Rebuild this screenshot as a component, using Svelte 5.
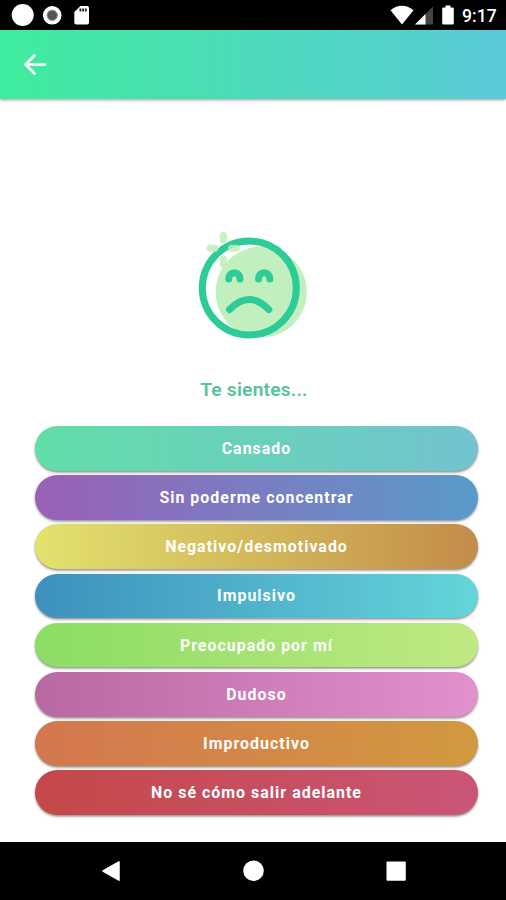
<script>
    const feelings = [
        { label: "Cansado", from: "#62dea8", to: "#72c3cf" },
        { label: "Sin poderme concentrar", from: "#9b5fb8", to: "#589bcb" },
        { label: "Negativo/desmotivado", from: "#e2e36d", to: "#c38c49" },
        { label: "Impulsivo", from: "#3d90bd", to: "#64d6da" },
        { label: "Preocupado por mí", from: "#8bdd65", to: "#c0e983" },
        { label: "Dudoso", from: "#ba68a2", to: "#e391cd" },
        { label: "Improductivo", from: "#d3774f", to: "#d3993f" },
        { label: "No sé cómo salir adelante", from: "#c44848", to: "#cb5577" },
    ];
</script>

<div class="screen">
    <div class="status">
        <svg width="110" height="30" viewBox="0 0 110 30">
            <circle cx="22.7" cy="15" r="11" fill="#fff" />
            <circle cx="52.2" cy="15.3" r="9.3" fill="#fff" />
            <circle cx="52.2" cy="15.3" r="5.2" fill="#555" stroke="#999" />
            <path
                d="M80.5 6H87a2 2 0 0 1 2 2v14.500a2 2 0 0 1-2 2H76.300a2 2 0 0 1-2-2V12z"
                fill="#fff"
            />
            <path d="M79.500 8.500h1.800v3h-1.800zm2.700 0H84v3h-1.800zm2.700 0h1.800v3h-1.800z" fill="#222" />
        </svg>
        <svg class="right" width="66" height="30" viewBox="390 0 66 30">
            <path d="M390.500 10.200Q402 1.500 413.500 10.200L402 24.500z" fill="#fff" />
            <path d="M433 6.500v18h-18z" fill="#444" />
            <path d="M425.500 14v10.500H415z" fill="#fff" />
            <path
                d="M445.500 5.500h5v2h2a1.300 1.300 0 0 1 1.300 1.300v14.400a1.300 1.300 0 0 1-1.300 1.300h-9a1.300 1.300 0 0 1-1.300-1.300V8.800a1.300 1.300 0 0 1 1.300-1.300h2z"
                fill="#fff"
            />
        </svg>
        <span class="time">9:17</span>
    </div>

    <header>
        <button class="back" aria-label="Atrás">
            <svg width="24" height="24" viewBox="0 0 24 24">
                <path d="M22 12.500H3M11.500 3.500l-9 9 9 9" />
            </svg>
        </button>
    </header>

    <main>
        <svg class="face" width="112" height="112" viewBox="0 0 112 112">
            <circle cx="65.200" cy="64" r="45.500" fill="#c2efbe" />
            <g class="lines">
                <circle cx="53.300" cy="60" r="47" />
                <path d="M32.700 51c0-8.500 11.300-8.500 11.300 0M62.500 51c0-8.500 11.300-8.500 11.300 0" />
                <path d="M33.500 81.500q19.800-20 39.300 0" />
            </g>
            <path class="spark" d="M27.300 7.500v4.500M27.300 31v5M14 20.300h5M35.500 20.300h5" />
        </svg>
        <h1>Te sientes...</h1>
        <div class="list">
            {#each feelings as f}
                <button
                    class="feeling"
                    style="background-image: linear-gradient(to right, {f.from}, {f.to})"
                >
                    {f.label}
                </button>
            {/each}
        </div>
    </main>

    <nav>
        <svg width="506" height="58" viewBox="0 842 506 58">
            <path d="M103 871l16-9.200v18.400z" stroke="#fff" stroke-width="1.500" stroke-linejoin="round" />
            <circle cx="253.500" cy="870.800" r="10.300" />
            <rect x="386.500" y="861.500" width="19.300" height="19.300" rx="1" />
        </svg>
    </nav>
</div>

<style>
    :global(body) {
        margin: 0;
    }

    .screen {
        display: flex;
        flex-direction: column;
        width: 506px;
        height: 900px;
        overflow: hidden;
        background: #fff;
        font-family: Roboto, sans-serif;
    }
    button {
        padding: 0;
        border: none;
        font-family: inherit;
    }
    svg {
        display: block;
    }

    .status {
        display: flex;
        align-items: center;
        height: 30px;
        background: #000;
        .right {
            margin-left: auto;
        }
        .time {
            width: 34px;
            margin: 2px 10px 0 6px;
            color: #fff;
            font-size: 17.6px;
            font-weight: 500;
            line-height: 30px;
            white-space: nowrap;
        }
    }

    header {
        display: flex;
        align-items: center;
        box-sizing: border-box;
        height: 68.500px;
        padding-left: 23px;
        background: linear-gradient(to right, #3fec9d, #5acad8);
        box-shadow: 0 1px 3px rgba(0, 0, 0, 0.4);
    }
    .back {
        background: none;
        path {
            fill: none;
            stroke: #fff;
            stroke-width: 2.700;
            stroke-linecap: round;
        }
    }

    main {
        display: flex;
        flex: 1;
        flex-direction: column;
        align-items: center;
    }
    .face {
        margin: 129.500px 0 0 -2px;
        path,
        .lines circle {
            fill: none;
            stroke-linecap: round;
        }
        .lines {
            stroke: #2ccb97;
            stroke-width: 7;
        }
        .spark {
            stroke: #bdedb8;
            stroke-width: 7;
            opacity: 0.85;
        }
    }
    h1 {
        margin: 36px 0 0 2px;
        color: #58c39b;
        font-size: 19.200px;
        font-weight: 600;
        letter-spacing: 0.2px;
        line-height: 28px;
    }
    .list {
        display: flex;
        flex-direction: column;
        gap: 4.500px;
        align-self: stretch;
        margin: 22px 28px 0 35px;
    }
    .feeling {
        height: 44.700px;
        border-radius: 23px;
        box-shadow: 0 1.500px 2.500px rgba(0, 0, 0, 0.45);
        color: #fff;
        font-size: 15.900px;
        font-weight: 700;
        letter-spacing: 1.030px;
    }

    nav {
        height: 58px;
        background: #000;
        fill: #fff;
    }
</style>
